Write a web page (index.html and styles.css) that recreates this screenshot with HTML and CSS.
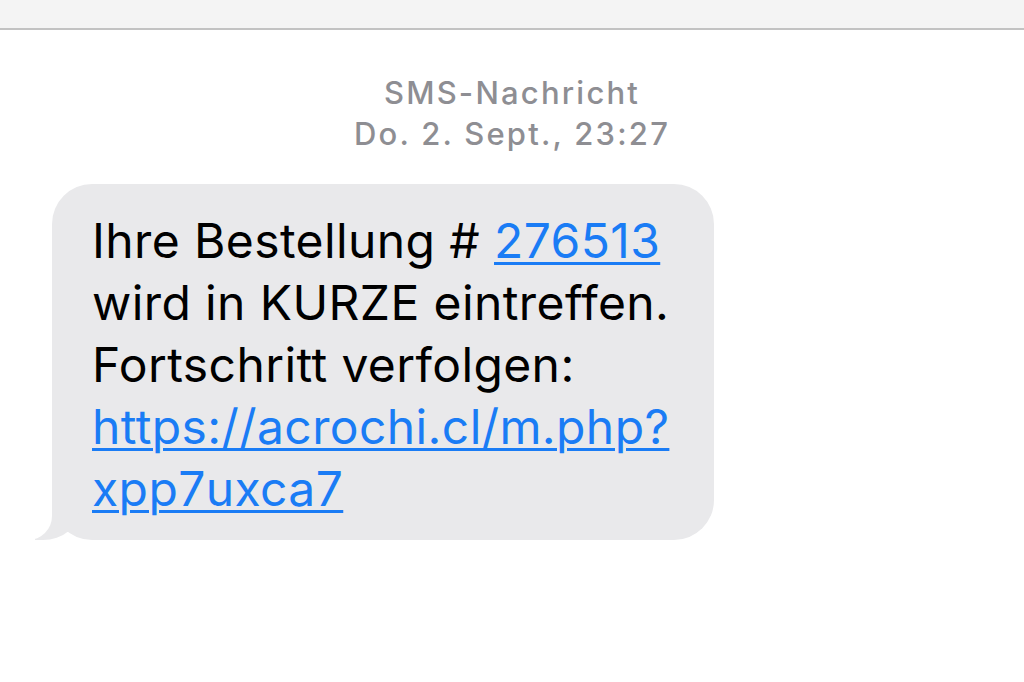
FILE: index.html
```html
<!DOCTYPE html>
<html lang="de">
<head>
    <meta charset="UTF-8">
    <meta name="viewport" content="width=device-width, initial-scale=1.0">
    <title>SMS-Nachricht</title>
    <link rel="stylesheet" href="styles.css">
</head>
<body>
    <div class="topbar"></div>
    <div class="thread">
        <div class="meta">
            <div class="meta-kind">SMS-Nachricht</div>
            <div class="meta-date">Do. 2. Sept., 23:27</div>
        </div>
        <div class="bubble">
            Ihre Bestellung # <a href="#">276513</a><br>
            wird in KURZE eintreffen.<br>
            Fortschritt verfolgen:<br>
            <a href="#">https://acrochi.cl/m.php?<br>xpp7uxca7</a>
        </div>
    </div>
</body>
</html>
```

FILE: styles.css
```css
body {
    margin: 0;
    background: #fff;
    font-family: Inter, "Noto Sans", sans-serif;
}

.topbar {
    height: 28px;
    background: #f4f4f4;
    border-bottom: 2px solid #c2c2c2;
}

.thread {
    padding-top: 42px;
}

.meta {
    text-align: center;
    color: #8e8e93;
    font-size: 31px;
    font-weight: 500;
    line-height: 41px;
    letter-spacing: 2.2px;
}

.bubble {
    position: relative;
    width: 622px;
    margin: 30px 0 0 52px;
    padding: 26px 0 20px 40px;
    background: #e9e9eb;
    border-radius: 40px;
    color: #000;
    font-size: 48px;
    line-height: 62px;
    letter-spacing: 0.4px;
}

.bubble a {
    color: #1a7cf5;
    text-decoration: underline;
    text-decoration-thickness: 3px;
    text-underline-offset: 4px;
}

/* tail */
.bubble::before {
    content: "";
    position: absolute;
    bottom: 0;
    left: -17px;
    width: 44px;
    height: 50px;
    background: #e9e9eb;
    border-bottom-right-radius: 36px 30px;
}

.bubble::after {
    content: "";
    position: absolute;
    bottom: 0;
    left: -50px;
    width: 50px;
    height: 50px;
    background: #fff;
    border-bottom-right-radius: 24px;
}
```
